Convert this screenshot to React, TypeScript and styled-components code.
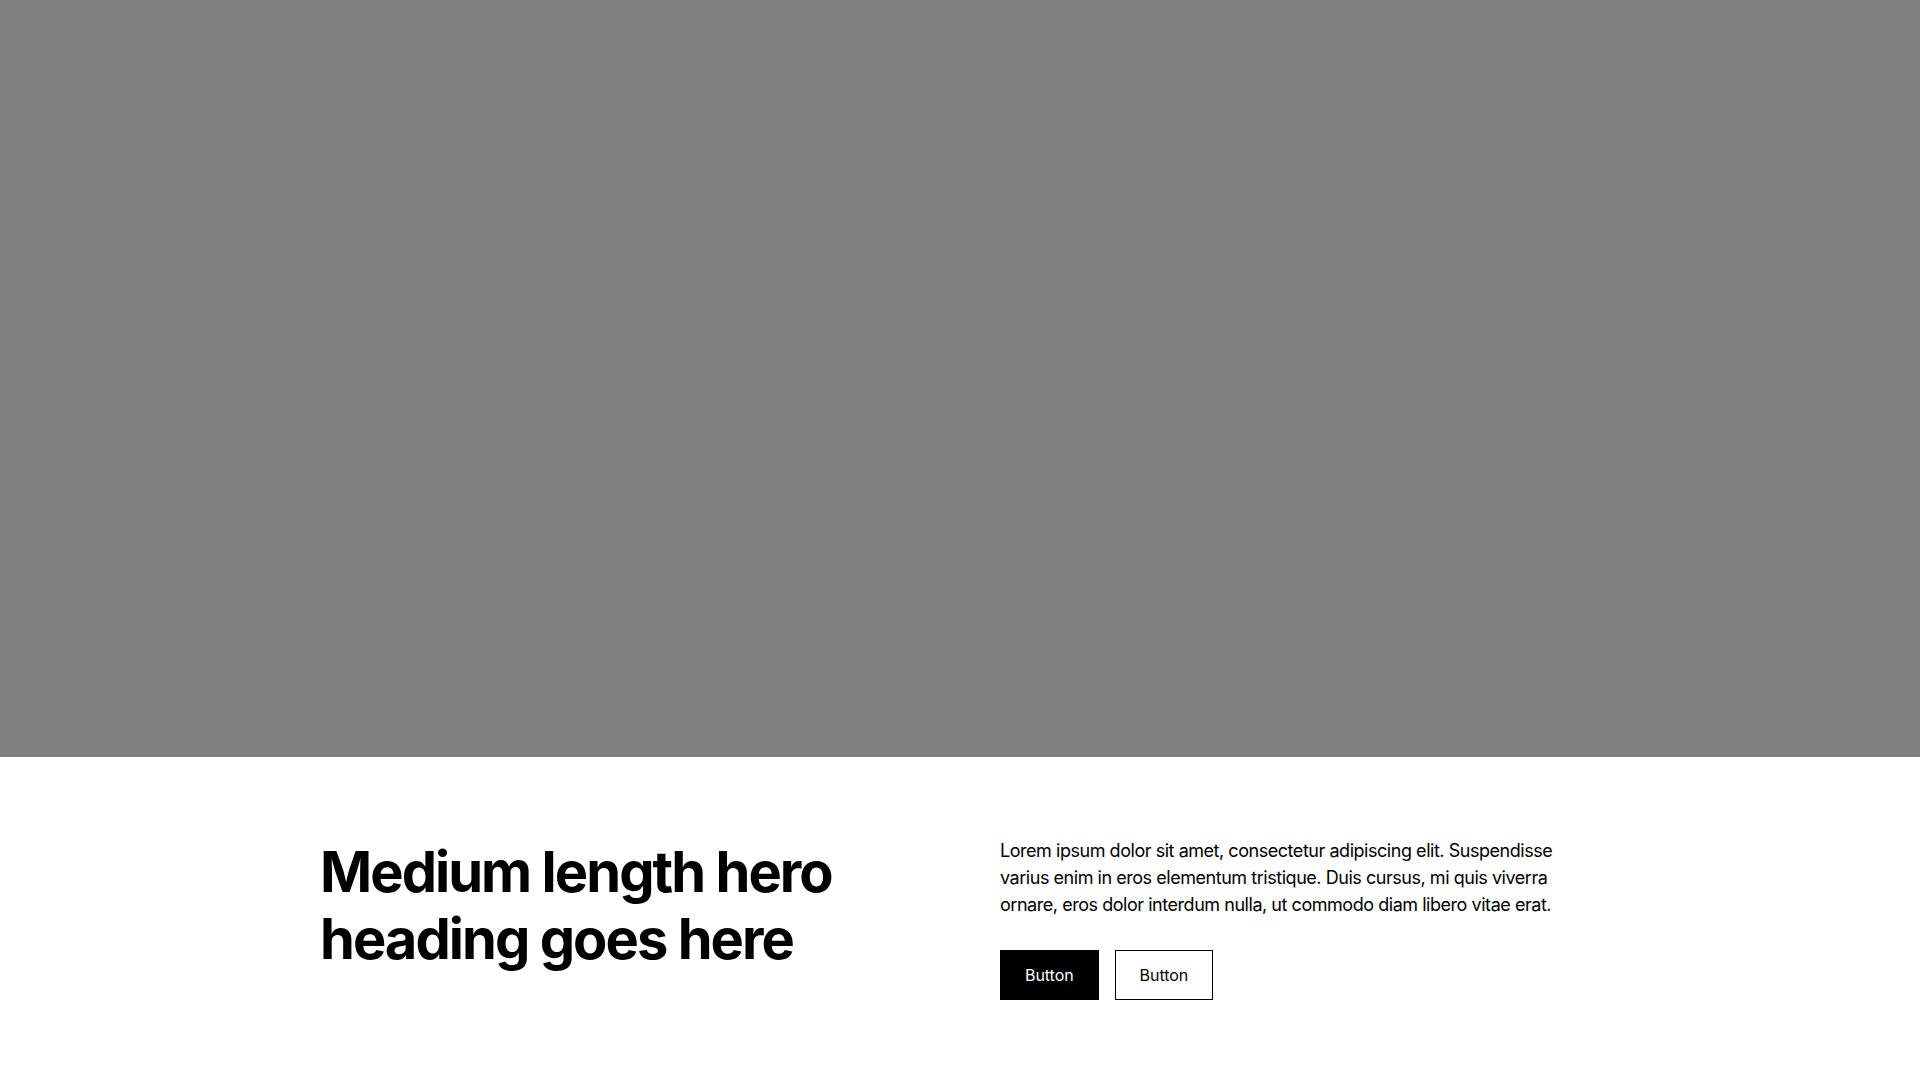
import React from "react";
import styled, { createGlobalStyle } from "styled-components";

const GlobalStyle = createGlobalStyle`
  html, body { margin: 0; padding: 0; background: #ffffff; }
  body { font-family: Inter, "Noto Sans", Arial, sans-serif; color: #000000; }
  * { box-sizing: border-box; }
`;

const Page = styled.main`
  display: flex;
  flex-direction: column;
  width: 100%;
`;

const HeroImage = styled.div`
  width: 100%;
  height: 757px;
  background: #808080;
`;

const Section = styled.section`
  padding: 80px 64px;
`;

const Container = styled.div`
  max-width: 1280px;
  margin: 0 auto;
  display: grid;
  grid-template-columns: 1fr 1fr;
  column-gap: 80px;
  align-items: start;
`;

const Heading = styled.h1`
  margin: 2px 0 0;
  font-size: 56px;
  line-height: 1.2;
  font-weight: 700;
  letter-spacing: -1.95px;
`;

const Content = styled.div`
  display: flex;
  flex-direction: column;
  gap: 32px;
`;

const Text = styled.p`
  margin: 0;
  font-size: 18px;
  line-height: 1.5;
  letter-spacing: -0.46px;
`;

const Actions = styled.div`
  display: flex;
  gap: 16px;
`;

const Button = styled.button<{ $variant: "primary" | "secondary" }>`
  font-family: inherit;
  font-size: 16px;
  line-height: 1.5;
  padding: 12px 24px;
  border: 1px solid #000000;
  border-radius: 0;
  cursor: pointer;
  letter-spacing: -0.05px;
  background: ${(p) => (p.$variant === "primary" ? "#000000" : "#ffffff")};
  color: ${(p) => (p.$variant === "primary" ? "#ffffff" : "#000000")};
`;

export default function App() {
  return (
    <>
      <GlobalStyle />
      <Page>
        <HeroImage />
        <Section>
          <Container>
            <Heading>Medium length hero heading goes here</Heading>
            <Content>
              <Text>
                Lorem ipsum dolor sit amet, consectetur adipiscing elit. Suspendisse varius enim in eros
                elementum tristique. Duis cursus, mi quis viverra ornare, eros dolor interdum nulla, ut
                commodo diam libero vitae erat.
              </Text>
              <Actions>
                <Button $variant="primary">Button</Button>
                <Button $variant="secondary">Button</Button>
              </Actions>
            </Content>
          </Container>
        </Section>
      </Page>
    </>
  );
}
